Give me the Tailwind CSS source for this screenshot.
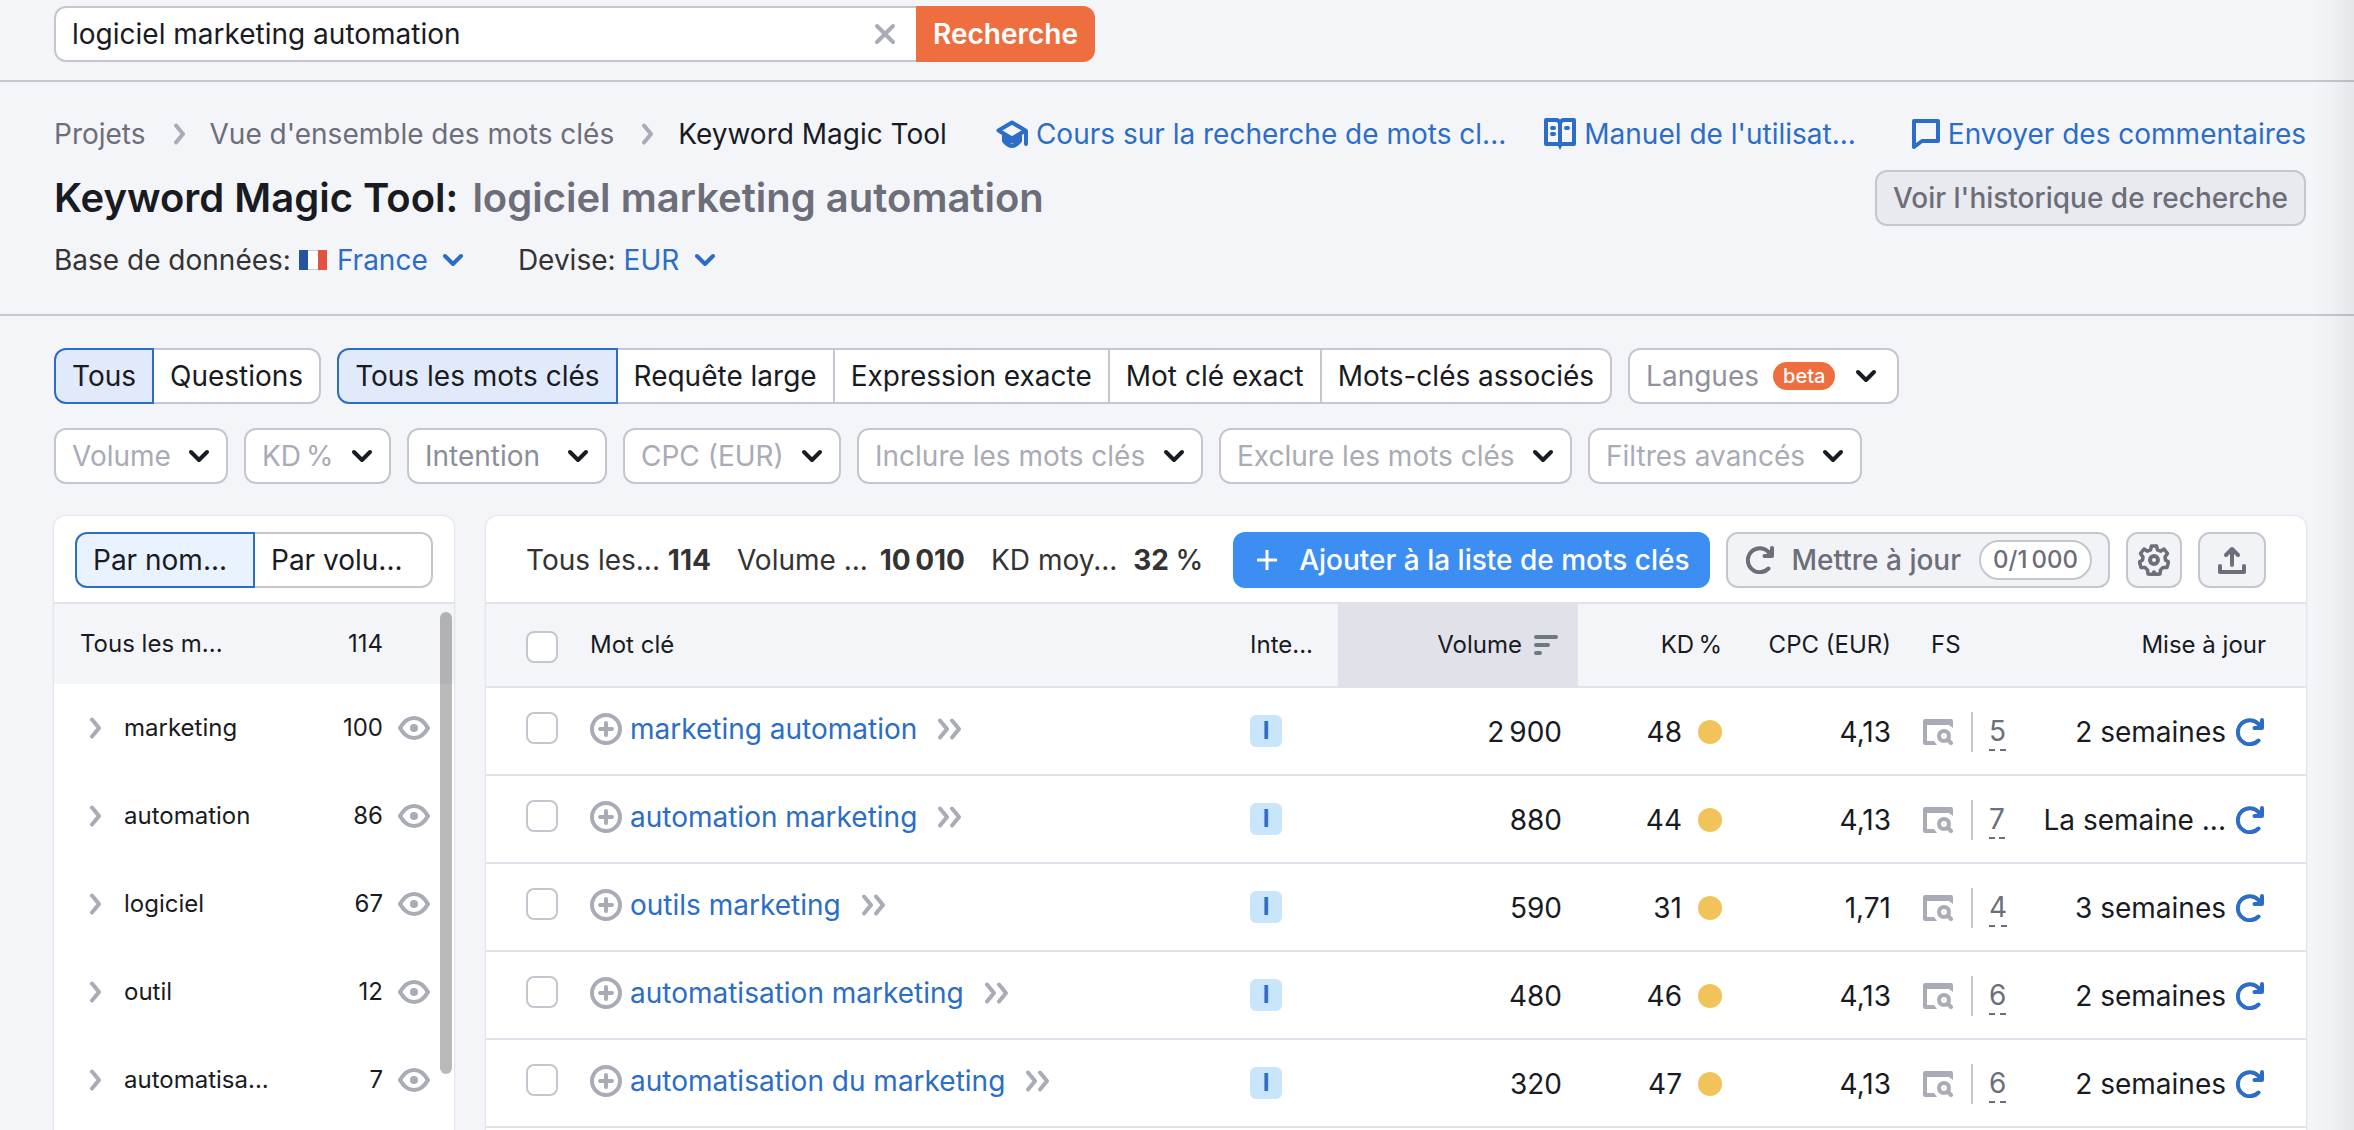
<!DOCTYPE html>
<html lang="fr">
<head>
<meta charset="utf-8">
<title>Keyword Magic Tool</title>
<script src="https://cdn.jsdelivr.net/npm/@tailwindcss/browser@4"></script>
</head>
<body class="relative flex min-h-screen flex-col overflow-x-hidden bg-[#f4f5f9] font-['Inter',sans-serif] text-[28px] leading-9 text-[#191b23]">

<svg class="hidden" aria-hidden="true">
  <symbol id="chevron-down" viewBox="0 0 22 14"><path d="M3 3l8 8 8-8" fill="none" stroke="currentColor" stroke-width="4" stroke-linecap="round" stroke-linejoin="round"/></symbol>
  <symbol id="chevron-right" viewBox="0 0 14 22"><path d="M3 2.500l7 8.500-7 8.500" fill="none" stroke="currentColor" stroke-width="4" stroke-linecap="round" stroke-linejoin="round"/></symbol>
  <symbol id="double-right" viewBox="0 0 26 22"><path d="M3 2.500l7 8.500-7 8.500M15 2.500l7 8.500-7 8.500" fill="none" stroke="currentColor" stroke-width="4" stroke-linecap="round" stroke-linejoin="round"/></symbol>
  <symbol id="refresh" viewBox="0 0 28 28"><path d="M22.500 22.500A12 12 0 1 1 23 6.500M26 2v8h-7.500" fill="none" stroke="currentColor" stroke-width="4" stroke-linecap="round" stroke-linejoin="round"/><path d="M21 5l5-1v6h-5z" fill="currentColor"/></symbol>
  <symbol id="eye" viewBox="0 0 32 24"><path d="M2 12C6 5 11 2 16 2s10 3 14 10c-4 7-9 10-14 10S6 19 2 12z" fill="none" stroke="currentColor" stroke-width="4" stroke-linejoin="round"/><circle cx="16" cy="12" r="4" fill="currentColor"/></symbol>
  <symbol id="plus-circle" viewBox="0 0 32 32"><circle cx="16" cy="16" r="14" fill="none" stroke="currentColor" stroke-width="4"/><path d="M16 10v12M10 16h12" fill="none" stroke="currentColor" stroke-width="4" stroke-linecap="round"/></symbol>
  <symbol id="serp" viewBox="0 0 30 26"><path d="M0 2a2 2 0 0 1 2-2h26a2 2 0 0 1 2 2v7l-4-3H4v16h7l3 4H2a2 2 0 0 1-2-2z" fill="currentColor"/><circle cx="21" cy="17" r="5" fill="none" stroke="currentColor" stroke-width="4"/><path d="M24.500 20.500l3.500 3.500" stroke="currentColor" stroke-width="4" stroke-linecap="round"/></symbol>
</svg>

<header class="border-b-2 border-[#c4c7cf] px-[54px] pt-1.5 pb-[18px]">
  <form class="flex h-14" onsubmit="return false">
    <div class="flex w-[862px] items-center rounded-l-xl border-2 border-r-0 border-[#c4c7cf] bg-white pl-4 pr-5">
      <input type="text" aria-label="Mot clé" value="logiciel marketing automation" class="min-w-0 flex-1 bg-transparent outline-none">
      <button type="button" aria-label="Effacer" class="text-[#a9abb6]"><svg class="size-[22px]" viewBox="0 0 22 22"><path d="M3 3l16 16M19 3L3 19" fill="none" stroke="currentColor" stroke-width="4" stroke-linecap="round"/></svg></button>
    </div>
    <button type="submit" class="rounded-r-xl bg-[#ee6e40] px-[17px] font-semibold text-white">Recherche</button>
  </form>
</header>

<section class="border-b-2 border-[#c4c7cf] pt-[34px] pr-12 pb-[34px] pl-[54px]">
  <div class="flex items-center justify-between whitespace-nowrap">
    <nav aria-label="Fil d'Ariane" class="flex items-center text-[#6c6e79]">
      <a href="#">Projets</a>
      <svg class="mr-[23px] ml-[27px] h-[22px] w-3.5 text-[#a9abb6]"><use href="#chevron-right"/></svg>
      <a href="#">Vue d'ensemble des mots clés</a>
      <svg class="mr-[23px] ml-[27px] h-[22px] w-3.5 text-[#a9abb6]"><use href="#chevron-right"/></svg>
      <span aria-current="page" class="text-[#191b23]">Keyword Magic Tool</span>
    </nav>
    <div class="flex items-center text-[#2b6dc7]">
      <a href="#" class="mr-[38px] flex items-center gap-2">
        <svg class="h-7 w-8" viewBox="0 0 32 28"><path d="M2.500 10.500L16 2.500l13.500 8L16 18.500zM30 11v13M8 15v6q8 10 16 0v-6M10.500 19q5.500 5 11 0" fill="none" stroke="currentColor" stroke-width="4" stroke-linejoin="round" stroke-linecap="round"/></svg>
        Cours sur la recherche de mots cl...</a>
      <a href="#" class="mr-14 flex items-center gap-2">
        <svg class="size-8" viewBox="0 0 32 32"><path d="M2 2h11l3 2 3-2h11v24H2zM16 4v24" fill="none" stroke="currentColor" stroke-width="4" stroke-linejoin="round"/><path d="M13 26h6l-3 6z" fill="currentColor"/><path d="M8 10h2M8 16h2M22 10h2" stroke="currentColor" stroke-width="4" stroke-linecap="round"/></svg>
        Manuel de l'utilisat...</a>
      <a href="#" class="flex items-center gap-2">
        <svg class="h-[30px] w-7" viewBox="0 0 28 30"><path d="M2 2h24v20H10l-8 6z" fill="none" stroke="currentColor" stroke-width="4" stroke-linejoin="round"/></svg>
        Envoyer des commentaires</a>
    </div>
  </div>
  <div class="mt-[18px] flex h-14 items-center justify-between whitespace-nowrap">
    <h1 class="text-[40px] font-semibold leading-[48px]">Keyword Magic Tool: <span class="ml-1 text-[#6c6e79]">logiciel marketing automation</span></h1>
    <button class="h-14 rounded-xl border-2 border-[#c4c7cf] bg-[#e9eaef] px-4 font-medium text-[#6c6e79]">Voir l'historique de recherche</button>
  </div>
  <div class="mt-3.5 flex h-10 items-center text-[#333]">
    <label for="db">Base de données:</label>
    <svg class="ml-2 mr-2.5 h-5 w-7" viewBox="0 0 28 20"><path d="M0 0h9v20H0z" fill="#2553a0"/><path d="M9 0h10v20H9z" fill="#fff"/><path d="M9 .5h10M9 19.500h10" stroke="#c9cbd2"/><path d="M19 0h9v20h-9z" fill="#e15241"/></svg>
    <div class="relative flex items-center text-[#2b6dc7]">
      <select id="db" class="appearance-none bg-transparent pr-9"><option>France</option></select>
      <svg class="pointer-events-none absolute right-0 h-3.5 w-[22px]"><use href="#chevron-down"/></svg>
    </div>
    <label for="cur" class="ml-[54px] mr-2">Devise:</label>
    <div class="relative flex items-center text-[#2b6dc7]">
      <select id="cur" class="appearance-none bg-transparent pr-9"><option>EUR</option></select>
      <svg class="pointer-events-none absolute right-0 h-3.5 w-[22px]"><use href="#chevron-down"/></svg>
    </div>
  </div>
</section>

<main class="flex flex-1 flex-col pl-[54px] pr-12 pt-8">
  <div class="flex h-14 gap-4 whitespace-nowrap">
    <div role="group" aria-label="Type" class="flex">
      <button aria-pressed="true" class="rounded-l-xl border-2 border-[#2b6dc7] bg-[#e1eafa] px-4">Tous</button>
      <button class="rounded-r-xl border-2 border-l-0 border-[#c4c7cf] bg-white px-4">Questions</button>
    </div>
    <div role="group" aria-label="Correspondance" class="flex">
      <button aria-pressed="true" class="rounded-l-xl border-2 border-[#2b6dc7] bg-[#e1eafa] px-4">Tous les mots clés</button>
      <button class="border-2 border-l-0 border-[#c4c7cf] bg-white px-4">Requête large</button>
      <button class="border-2 border-l-0 border-[#c4c7cf] bg-white px-4">Expression exacte</button>
      <button class="border-2 border-l-0 border-[#c4c7cf] bg-white px-4">Mot clé exact</button>
      <button class="rounded-r-xl border-2 border-l-0 border-[#c4c7cf] bg-white px-4">Mots-clés associés</button>
    </div>
    <button aria-haspopup="listbox" class="flex items-center rounded-xl border-2 border-[#c4c7cf] bg-white pl-4 pr-5 text-[#8f919d]">Langues
      <span class="mr-5 ml-3.5 rounded-full bg-[#ee6e40] px-2.5 text-xl font-medium leading-7 text-white">beta</span>
      <svg class="h-3.5 w-[22px] text-[#191b23]"><use href="#chevron-down"/></svg>
    </button>
  </div>
  <div id="filters" class="mt-6 flex h-14 gap-4"></div>

  <div class="mt-8 flex flex-1 items-stretch gap-8">
    <aside class="relative w-[400px] shrink-0 overflow-hidden rounded-t-xl bg-white shadow-[0_0_2px_1px_#e0e1e9]">
      <div class="flex h-[88px] items-center border-b-2 border-[#e0e1e9] px-[21px] pt-0.5">
        <button aria-pressed="true" class="h-14 w-[180px] rounded-l-xl border-2 border-[#2b6dc7] bg-[#e9f2ff] pl-4 text-left">Par nom...</button>
        <button class="h-14 flex-1 rounded-r-xl border-2 border-l-0 border-[#c4c7cf] bg-white pl-4 text-left">Par volu...</button>
      </div>
      <div class="flex h-20 items-center justify-between bg-[#f4f5f9] pl-[26px] pr-[71px] text-2xl"><span>Tous les m...</span><span>114</span></div>
      <ul id="groups" class="text-2xl"></ul>
      <div class="absolute top-24 right-0.5 h-[462px] w-3 rounded-full bg-black/27"></div>
    </aside>

    <section class="min-w-0 flex-1 overflow-hidden rounded-t-xl bg-white shadow-[0_0_2px_1px_#e0e1e9]">
      <div class="flex h-[88px] items-center border-b-2 border-[#e0e1e9] px-10 pt-0.5 whitespace-nowrap">
        <div class="flex gap-[26px] text-[#333]">
          <span>Tous les... <b class="font-bold">114</b></span>
          <span>Volume ... <b class="ml-1 font-bold">10&#8239;010</b></span>
          <span>KD moy... <b class="ml-2 font-bold">32 </b><span class="font-medium">%</span></span>
        </div>
        <div class="ml-auto flex gap-4">
          <button class="flex h-14 items-center gap-[22px] rounded-xl bg-[#3d8ef2] pl-6 pr-5 font-medium text-white"><svg class="size-5" viewBox="0 0 20 20"><path d="M10 1v18M1 10h18" stroke="currentColor" stroke-width="3" stroke-linecap="round"/></svg>Ajouter à la liste de mots clés</button>
          <button class="flex h-14 items-center rounded-xl border-2 border-[#c4c7cf] bg-[#f2f3f6] pl-[18px] pr-4 font-medium text-[#6c6e79]"><svg class="mr-[18px] size-7"><use href="#refresh"/></svg>Mettre à jour<span class="ml-[18px] rounded-full border-2 border-[#c4c7cf] bg-white px-3 text-2xl leading-9">0/1&#8239;000</span></button>
          <button aria-label="Réglages" class="flex size-14 items-center justify-center rounded-xl border-2 border-[#c4c7cf] bg-[#f2f3f6] text-[#6c6e79]"><svg class="size-8" viewBox="0 0 32 32"><path d="M13.500 2h5l1 4 3 1.200L26 5l3.500 4.500L27 13l.5 3 3 2-1.500 5.500-4 0-2.500 2.500L22 30l-4.500.500L16 28l-1.500 2.500L10 30l-.5-4L7 23.500l-4 0L1.500 18l3-2 .5-3-2.500-3.500L6 5l3.500 2.200 3-1.200z" fill="none" stroke="currentColor" stroke-width="3.500" stroke-linejoin="round"/><circle cx="16" cy="16" r="4" fill="none" stroke="currentColor" stroke-width="4"/></svg></button>
          <button aria-label="Exporter" class="flex h-14 w-[68px] items-center justify-center rounded-xl border-2 border-[#c4c7cf] bg-[#f2f3f6] text-[#6c6e79]"><svg class="size-7" viewBox="0 0 28 28"><path d="M14 19V4M8 9l6-6 6 6M2 20v6h24v-6" fill="none" stroke="currentColor" stroke-width="4" stroke-linecap="round" stroke-linejoin="round"/></svg></button>
        </div>
      </div>
      <table class="w-full table-fixed">
        <colgroup><col class="w-[104px]"><col><col class="w-[88px]"><col class="w-[240px]"><col class="w-[144px]"><col class="w-[169px]"><col class="w-[133px]"><col class="w-[282px]"></colgroup>
        <thead>
          <tr class="h-[83px] border-b-2 border-[#e0e1e9] bg-[#f4f5f9] text-2xl">
            <th class="pt-1 pl-10 text-left align-middle font-normal"><input type="checkbox" aria-label="Tout sélectionner" class="block size-8 appearance-none rounded-lg border-2 border-[#c4c7cf] bg-white"></th>
            <th class="text-left font-normal">Mot clé</th>
            <th class="text-left font-normal">Inte...</th>
            <th class="bg-[#e0e1e9] pr-5 font-normal"><span class="flex items-center justify-end gap-3">Volume<svg class="h-5 w-6 text-[#6c7a80]" viewBox="0 0 24 20"><path d="M2 2h20M2 10h12M2 18h4" stroke="currentColor" stroke-width="4" stroke-linecap="round"/></svg></span></th>
            <th class="text-right font-normal">KD&#8239;%</th>
            <th class="text-right font-normal">CPC (EUR)</th>
            <th class="pl-10 text-left font-normal">FS</th>
            <th class="pr-10 text-right font-normal">Mise à jour</th>
          </tr>
        </thead>
        <tbody id="rows"></tbody>
      </table>
    </section>
  </div>
</main>

<div class="pointer-events-none absolute inset-y-0 right-0 w-11 bg-linear-to-r from-transparent via-black/2 to-black/6"></div>

<script>
const icon = (id, cls) => `<svg class="${cls}"><use href="#${id}"/></svg>`;

document.getElementById('filters').innerHTML = ['Volume', 'KD\u202f%', 'Intention', 'CPC (EUR)', 'Inclure les mots clés', 'Exclure les mots clés', 'Filtres avancés'].map(name => `
  <div class="relative flex items-center">
    <select aria-label="${name}" class="h-14 appearance-none rounded-xl border-2 border-[#c4c7cf] bg-white pl-4 ${name === 'Intention' ? 'pr-16 text-[#8a8e9b]' : 'pr-[55px] text-[#a9abb6]'}"><option>${name}</option></select>
    ${icon('chevron-down', 'pointer-events-none absolute right-[18px] h-3.5 w-[22px] text-[#191b23]')}
  </div>`).join('');

document.getElementById('groups').innerHTML = [['marketing', 100], ['automation', 86], ['logiciel', 67], ['outil', 12], ['automatisa...', 7]].map(([name, n]) => `
  <li class="flex h-[88px] items-center pl-[35px] pr-6">
    <button aria-label="Déplier ${name}" class="text-[#a9abb6]">${icon('chevron-right', 'h-[22px] w-3.5')}</button>
    <span class="ml-[21px] flex-1">${name}</span><span>${n}</span>
    <button aria-label="Masquer ${name}" class="ml-[15px] text-[#a9abb6]">${icon('eye', 'h-6 w-8')}</button>
  </li>`).join('');

document.getElementById('rows').innerHTML = [
  ['marketing automation', '2\u202f900', 48, '4,13', 5, '2 semaines'],
  ['automation marketing', '880', 44, '4,13', 7, 'La semaine ...'],
  ['outils marketing', '590', 31, '1,71', 4, '3 semaines'],
  ['automatisation marketing', '480', 46, '4,13', 6, '2 semaines'],
  ['automatisation du marketing', '320', 47, '4,13', 6, '2 semaines'],
].map(([kw, vol, kd, cpc, fs, date]) => `
  <tr class="h-[88px] border-b-2 border-[#e0e1e9]">
    <td class="pb-1.5 pl-10"><input type="checkbox" aria-label="${kw}" class="block size-8 appearance-none rounded-lg border-2 border-[#c4c7cf] bg-white"></td>
    <td class="pb-1"><div class="flex items-center whitespace-nowrap">
      <button aria-label="Ajouter ${kw}" class="text-[#a9abb6]">${icon('plus-circle', 'size-8')}</button>
      <a href="#" class="ml-2 mr-5 text-[#2b6dc7]">${kw}</a>${icon('double-right', 'h-[22px] w-[26px] text-[#a9abb6]')}
    </div></td>
    <td><span class="flex size-8 items-center justify-center rounded-md bg-[#c8e5fc] text-2xl font-bold text-[#2b6dc7]">I</span></td>
    <td class="pt-0.5 pr-4 text-right">${vol}</td>
    <td class="pt-0.5"><span class="flex items-center justify-end gap-4">${kd}<i class="size-6 rounded-full bg-[#f3c35b]"></i></span></td>
    <td class="pt-0.5 text-right">${cpc}</td>
    <td class="pt-0.5"><div class="flex items-center pl-8 text-[#6c6e79]">
      ${icon('serp', 'h-[26px] w-[30px] text-[#a9abb6]')}
      <span class="ml-[18px] mr-4 h-10 w-0.5 bg-[#c4c7cf]"></span>
      <a href="#" class="border-b-2 border-dashed border-[#6c6e79] leading-9">${fs}</a>
    </div></td>
    <td class="pt-0.5 pr-[42px]"><div class="flex items-center justify-end gap-2.5 whitespace-nowrap">${date}<button aria-label="Actualiser ${kw}" class="text-[#2b6dc7]">${icon('refresh', 'size-7')}</button></div></td>
  </tr>`).join('');
</script>
</body>
</html>
